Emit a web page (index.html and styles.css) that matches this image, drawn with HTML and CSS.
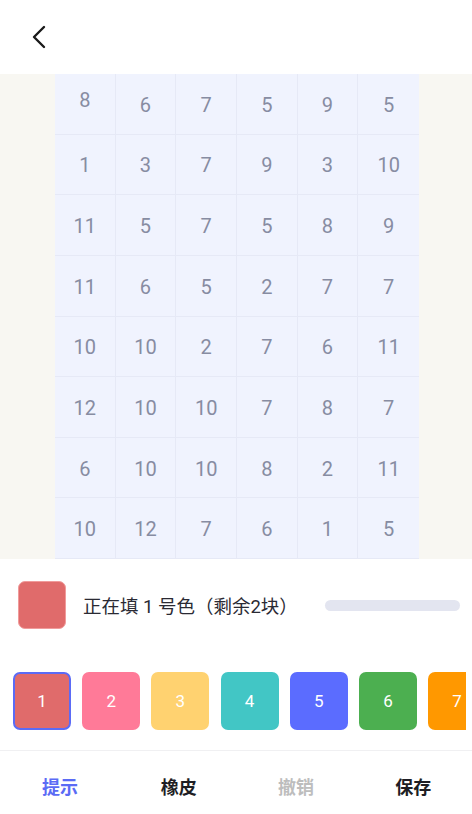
FILE: index.html
```html
<!DOCTYPE html>
<html lang="zh">
<head>
  <meta charset="UTF-8" />
  <meta name="viewport" content="width=device-width, initial-scale=1" />
  <title>数字填色</title>
  <link rel="stylesheet" href="styles.css">
</head>
<body>
  <div class="page">
    <header class="topbar">
      <button class="back" aria-label="返回">
        <svg width="16" height="24" viewBox="0 0 16 24"><path d="M13 2 L3 12 L13 22" fill="none" stroke="#1a1a1a" stroke-width="2.4" stroke-linecap="round" stroke-linejoin="round"/></svg>
      </button>
    </header>

    <main class="canvas">
      <div class="grid" id="grid"></div>
    </main>

    <section class="panel">
      <div class="status">
        <div class="current"></div>
        <div class="status-text">正在填 1 号色（剩余2块）</div>
        <div class="progress"><div class="progress-fill"></div></div>
      </div>

      <div class="palette">
        <div class="swatch c1 active">1</div>
        <div class="swatch c2">2</div>
        <div class="swatch c3">3</div>
        <div class="swatch c4">4</div>
        <div class="swatch c5">5</div>
        <div class="swatch c6">6</div>
        <div class="swatch c7">7</div>
      </div>
    </section>

    <nav class="actions">
      <span class="action hint">提示</span>
      <span class="action">橡皮</span>
      <span class="action disabled">撤销</span>
      <span class="action">保存</span>
    </nav>
  </div>

  <script>
    const cells = [
      [8, 6, 7, 5, 9, 5],
      [1, 3, 7, 9, 3, 10],
      [11, 5, 7, 5, 8, 9],
      [11, 6, 5, 2, 7, 7],
      [10, 10, 2, 7, 6, 11],
      [12, 10, 10, 7, 8, 7],
      [6, 10, 10, 8, 2, 11],
      [10, 12, 7, 6, 1, 5]
    ];
    const grid = document.getElementById('grid');
    cells.forEach(function(row, r) {
      row.forEach(function(n, c) {
        const cell = document.createElement('div');
        cell.className = 'cell' + (r === 0 && c === 0 ? ' raised' : '');
        cell.textContent = n;
        grid.appendChild(cell);
      });
    });
  </script>
</body>
</html>
```

FILE: styles.css
```css
* {
  box-sizing: border-box;
}

body {
  margin: 0;
  font-family: Roboto, "Noto Sans CJK SC", sans-serif;
  background: #fff;
}

.page {
  width: 472px;
  height: 814px;
  display: flex;
  flex-direction: column;
  overflow: hidden;
}

.topbar {
  height: 74px;
  display: flex;
  align-items: center;
  padding-left: 31px;
}

.back {
  border: none;
  background: none;
  padding: 0;
  display: flex;
}

.canvas {
  height: 485px;
  background-color: #f8f7f2;
  display: flex;
  justify-content: center;
  padding-left: 2px;
}

.grid {
  width: 364px;
  display: grid;
  grid-template-columns: repeat(6, 1fr);
  grid-template-rows: repeat(8, 1fr);
  background-color: #f0f3fe;
}

.cell {
  display: flex;
  align-items: center;
  justify-content: center;
  border-right: 1px solid #e6e9f6;
  border-bottom: 1px solid #e6e9f6;
  color: #878ca2;
  font-size: 20px;
  padding-top: 2px;
}

.cell:nth-child(6n) {
  border-right: none;
}

.cell.raised {
  padding-top: 0;
  padding-bottom: 8px;
}

.panel {
  background: #fff;
  border-bottom: 1px solid #f0f0f2;
}

.status {
  display: flex;
  align-items: flex-start;
  padding: 22px 12px 0 18px;
  height: 94px;
}

.current {
  width: 48px;
  height: 48px;
  border-radius: 7px;
  background-color: #e06b6b;
  border: 1px solid #f09b9b;
}

.status-text {
  margin-left: 17px;
  margin-top: 11px;
  font-size: 18.5px;
  color: #2a2a33;
  width: 243px;
  white-space: nowrap;
}

.progress {
  margin-top: 19px;
  width: 135px;
  height: 11px;
  border-radius: 6px;
  background-color: #e3e5f0;
}

.progress-fill {
  width: 0;
}

.palette {
  display: flex;
  gap: 11.2px;
  padding: 19px 0 0 13px;
  width: 466px;
  height: 97px;
  overflow: hidden;
}

.swatch {
  flex: 0 0 58px;
  height: 58px;
  border-radius: 7px;
  display: flex;
  align-items: center;
  justify-content: center;
  color: #fff;
  font-size: 17px;
}

.swatch.active {
  border: 2px solid #5b6bf6;
}

.c1 { background-color: #e06b6b; }
.c2 { background-color: #ff7a98; }
.c3 { background-color: #ffd270; }
.c4 { background-color: #42c6c5; }
.c5 { background-color: #5b6cff; }
.c6 { background-color: #4caf50; }
.c7 { background-color: #ff9800; }

.actions {
  flex: 1;
  display: flex;
  align-items: center;
  padding-top: 6px;
}

.action {
  flex: 1;
  text-align: center;
  font-size: 18px;
  font-weight: bold;
  color: #1e1e24;
}

.action.hint {
  color: #5b6bf5;
  flex: 0 0 120px;
}

.action.disabled {
  color: #bdbdbd;
}
```
